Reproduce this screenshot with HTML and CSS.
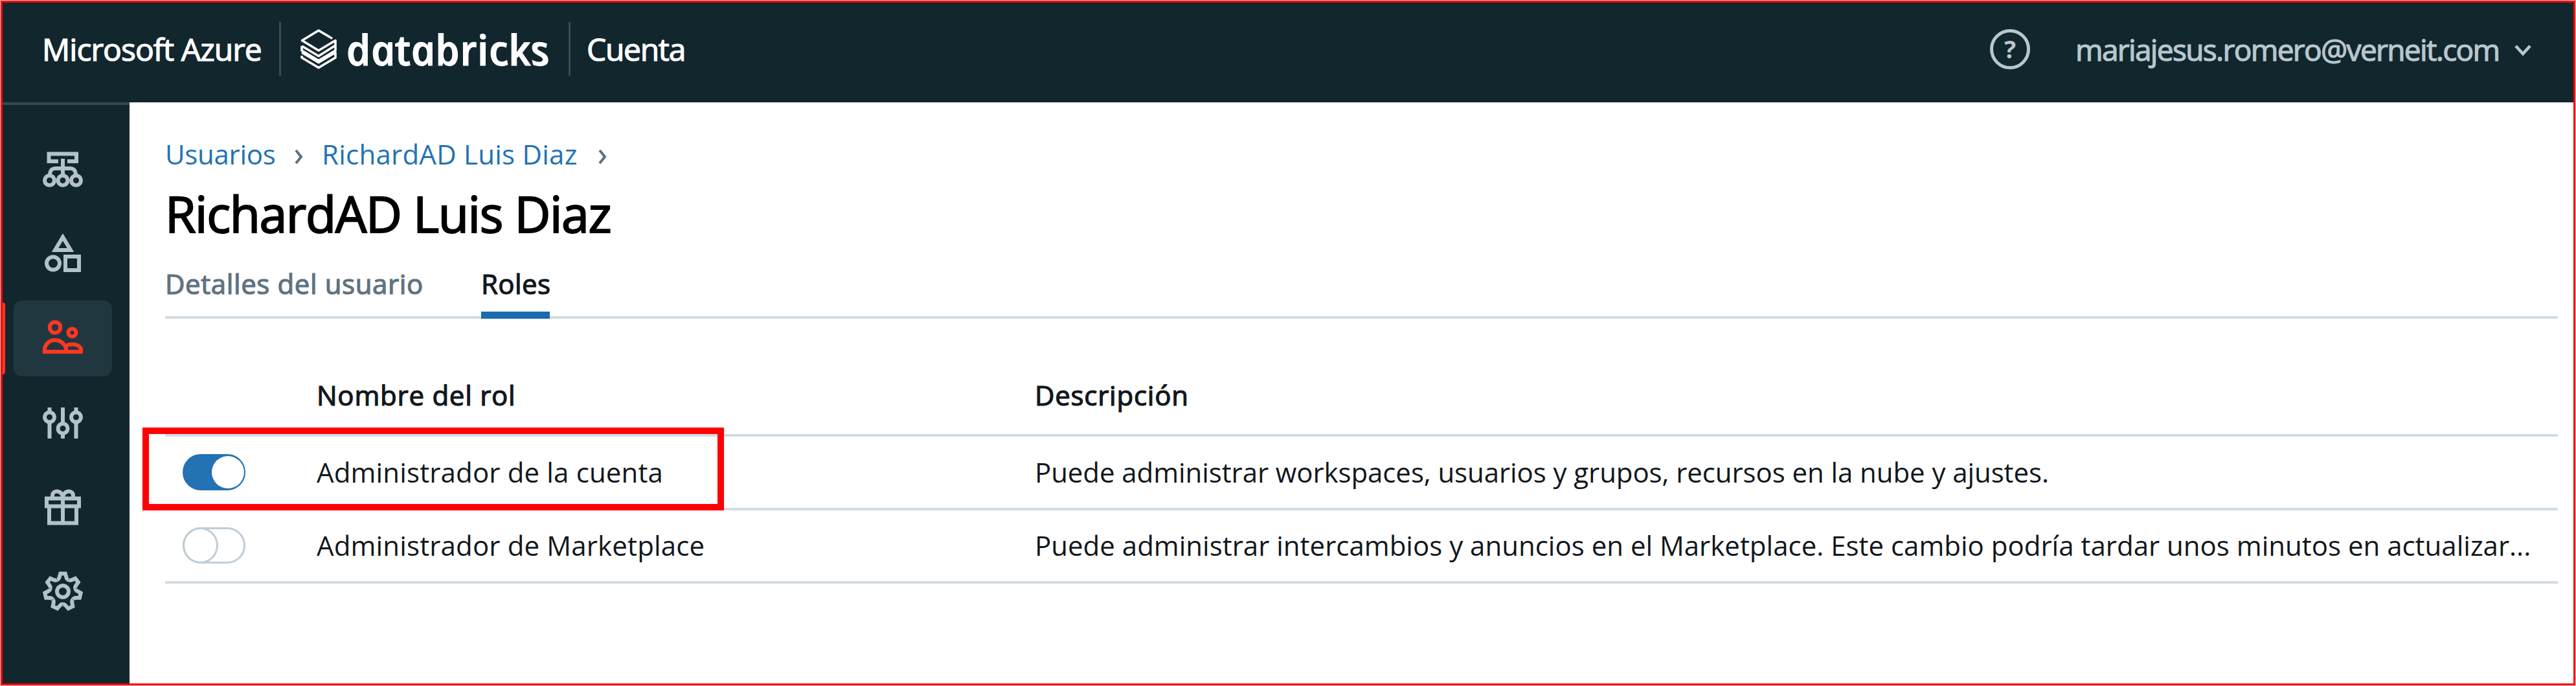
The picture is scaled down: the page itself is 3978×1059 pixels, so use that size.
FILE: index.html
```
<!DOCTYPE html>
<html lang="es">
<head>
<meta charset="utf-8">
<title>Databricks - Cuenta</title>
<link rel="stylesheet" href="styles.css">
</head>
<body>
<div class="frame">
  <header class="topbar">
    <span class="azure">Microsoft Azure</span>
    <span class="divider"></span>
    <div class="logo">
      <svg class="logo-mark" viewBox="0 0 58 64"><path d="M55 23.5V18.500L29 34 3.500 18.500 29 3 50 15.500M3 27v7l26 15.500L55 34v-8M3 27l26 15.500L55 26V18M3 42v3l26 15.500L55 45v-8L29 52.500 3 37"/></svg>
      <span class="logo-text">databricks</span>
    </div>
    <span class="divider"></span>
    <span class="product">Cuenta</span>
    <div class="account">
      <span class="help">?</span>
      <span class="email">mariajesus.romero@verneit.com</span>
      <svg class="caret" viewBox="0 0 28 20"><path d="M3 3l11 12L25 3"/></svg>
    </div>
  </header>
  <div class="body">
    <nav class="sidebar">
      <a class="item"><svg class="icon" viewBox="0 0 62 62"><path d="M24 18H9.500V6.500H52V18H38M31 14v26M11 40C11 32 14 29 20 29H42C48 29 51 32 51 40"/><circle cx="10.500" cy="47.500" r="7.500"/><circle cx="31" cy="47.500" r="7.500"/><circle cx="51.500" cy="47.500" r="7.500"/></svg></a>
      <a class="item"><svg class="icon" viewBox="0 0 62 62"><path d="M31 5L19 25H43ZM35 35H56V56H35Z"/><circle cx="16" cy="45.500" r="10"/></svg></a>
      <a class="item active"><svg class="icon" viewBox="0 0 62 62"><circle cx="19" cy="14.500" r="8.200"/><circle cx="45.500" cy="22.500" r="6"/><path d="M3 52V46C6 38 12 34 19 34S32 38 36 46V52ZM36 52H59V47C56 42 51 40.500 45.500 40.500C41 40.500 38 41.500 35 43"/></svg></a>
      <a class="item"><svg class="icon" viewBox="0 0 62 62"><path d="M10.500 7v8M10.500 29v26M31 7v25M31 47v8M51.500 7v8M51.500 29v26"/><circle cx="10.500" cy="22" r="7.500"/><circle cx="31" cy="39.500" r="7.500"/><circle cx="51.500" cy="22" r="7.500"/></svg></a>
      <a class="item"><svg class="icon" viewBox="0 0 62 62"><path d="M6 17.500H56V29.500H6ZM10 29.500V55.500H52V29.500M31 15V55M15 17V13C15 9 18 6.500 21.500 6.500C26 6.500 31 10 31 16C31 10 36 6.500 40.500 6.500C44 6.500 47 9 47 13V17"/></svg></a>
      <a class="item"><svg class="icon" viewBox="-31 -31 62 62"><defs><path id="tooth" d="M-8.500 -18Q-6.200 -18.800 -5.300 -22L-3.800 -27.500H3.800L5.300 -22Q6.200 -18.800 8.500 -18"/></defs><use href="#tooth"/><use href="#tooth" transform="rotate(51.430)"/><use href="#tooth" transform="rotate(102.860)"/><use href="#tooth" transform="rotate(154.290)"/><use href="#tooth" transform="rotate(205.710)"/><use href="#tooth" transform="rotate(257.140)"/><use href="#tooth" transform="rotate(308.570)"/><circle r="9"/></svg></a>
    </nav>
    <main class="main">
      <div class="crumbs">
        <a class="crumb">Usuarios</a>
        <svg class="sep" viewBox="0 0 13 24"><path d="M2 2l8 10-8 10"/></svg>
        <a class="crumb person">RichardAD Luis Diaz</a>
        <svg class="sep" viewBox="0 0 13 24"><path d="M2 2l8 10-8 10"/></svg>
      </div>
      <h1 class="title">RichardAD Luis Diaz</h1>
      <div class="tabs">
        <a class="tab">Detalles del usuario</a>
        <a class="tab current">Roles</a>
      </div>
      <div class="table">
        <div class="row head"><span></span><span>Nombre del rol</span><span>Descripción</span></div>
        <div class="row">
          <span class="toggle on"></span>
          <span class="name">Administrador de la cuenta</span>
          <span class="short">Puede administrar workspaces, usuarios y grupos, recursos en la nube y ajustes.</span>
          <span class="highlight"></span>
        </div>
        <div class="row">
          <span class="toggle"></span>
          <span class="name">Administrador de Marketplace</span>
          <span>Puede administrar intercambios y anuncios en el Marketplace. Este cambio podría tardar unos minutos en actualizar...</span>
        </div>
      </div>
    </main>
  </div>
</div>
</body>
</html>
```
FILE: styles.css
```
*, *::before { box-sizing: border-box; }
body {
  margin: 0;
  padding: 1px;
  height: 1059px;
  background: #f5d3d3;
  font: 400 42px/56px "Open Sans", sans-serif;
  color: #11171c;
}
svg { display: block; fill: none; stroke: currentColor; flex: none; }
.frame {
  height: 1057px;
  border: 3px solid #f00;
  background: #fff;
  display: flex;
  flex-direction: column;
}

/* Medium weight, between the regular and semibold cuts */
.azure, .product, .email, .tab, .row.head { -webkit-text-stroke: 1.2px currentColor; }

/* Top bar */
.topbar {
  height: 154px;
  flex: none;
  padding: 0 64px 11px 61px;
  background: #12262d;
  color: #fff;
  display: flex;
  align-items: center;
  white-space: nowrap;
}
.azure, .product { font-size: 48px; }
.azure { width: 366px; letter-spacing: -0.95px; }
.product { margin-left: 25px; letter-spacing: -1.3px; }
.divider { width: 3px; height: 83px; background: #3b4b52; flex: none; }
.logo { width: 444px; padding-left: 29px; display: flex; align-items: center; gap: 12px; }
.logo-mark { width: 58px; height: 64px; stroke-width: 3.6; stroke-linejoin: round; }
/* The italic cut has the wordmark's single-storey "a"; the skew sets it upright. */
.logo-text {
  display: inline-block;
  font-size: 65px;
  font-style: italic;
  font-weight: 600;
  -webkit-text-stroke: 1px currentColor;
  transform: skewX(12deg);
}
.account { margin-left: auto; display: flex; align-items: center; color: #b8c7ce; }
.help {
  width: 62px;
  height: 62px;
  border: 5.5px solid;
  border-radius: 50%;
  font-size: 38px;
  line-height: 50px;
  font-weight: 700;
  text-align: center;
}
.email { width: 677px; margin-left: 70px; font-size: 46px; letter-spacing: -1.65px; }
.caret { width: 28px; height: 20px; stroke-width: 4.8; margin-top: 5px; }

/* Sidebar */
.body { flex: 1; display: flex; min-height: 0; }
.sidebar {
  width: 196px;
  flex: none;
  padding: 41px 0 0 17px;
  border-top: 4px solid #39484e;
  background: #12262d;
  color: #b3c2c9;
  display: flex;
  flex-direction: column;
  gap: 13.4px;
}
.item {
  position: relative;
  width: 152px;
  height: 117px;
  border-radius: 13px;
  display: flex;
  align-items: center;
  justify-content: center;
}
.item.active { background: #203740; color: #ff3621; }
.item.active::before {
  content: "";
  position: absolute;
  left: -17px;
  top: 3px;
  width: 4px;
  height: 111px;
  border-radius: 0 4px 4px 0;
  background: #ff3621;
}
.icon { width: 62px; height: 62px; stroke-width: 6; }

/* Content */
.main { flex: 1; min-width: 0; padding: 52px 24px 0 55px; }
.crumbs { display: flex; align-items: center; height: 56px; color: #2272b4; }
.crumb:first-child { width: 200px; letter-spacing: -0.3px; }
.crumb.person { margin-left: 29px; width: 427px; letter-spacing: 0.25px; }
.sep { width: 13px; height: 24px; stroke: #5f7281; stroke-width: 4; margin-top: 7px; }
.title {
  margin: 14px 0 0;
  font-size: 77px;
  font-weight: 400;
  line-height: 100px;
  letter-spacing: -1.4px;
  color: #000;
  -webkit-text-stroke: 2px currentColor;
}
.tabs {
  height: 98px;
  margin-top: 14px;
  display: flex;
  gap: 89px;
  box-shadow: inset 0 -4px #d3dce3;
  line-height: 87px;
}
.tab { width: 399px; letter-spacing: 0.6px; color: #5f7281; white-space: nowrap; }
.tab.current { width: 106px; color: #11171c; letter-spacing: 0.4px; border-bottom: 11px solid #1a6bb0; }

/* Roles table */
.table { margin-top: 57px; }
.row {
  position: relative;
  display: grid;
  grid-template-columns: 234px 1109px 1fr;
  align-items: center;
  height: 113.500px;
  border-bottom: 4px solid #d3dce3;
  white-space: nowrap;
}
.row.head { height: 125px; letter-spacing: 0.75px; }
.name { letter-spacing: 0.15px; }
.short { letter-spacing: -0.08px; }
.toggle {
  width: 97px;
  height: 56px;
  margin-left: 27px;
  border: 3px solid #c0cdd8;
  border-radius: 28px;
  display: flex;
}
.toggle::before {
  content: "";
  width: 55px;
  height: 56px;
  margin: -3px;
  border: 3px solid #c0cdd8;
  border-radius: 50%;
}
.toggle.on { background: #2272b4; border-color: #2272b4; justify-content: flex-end; }
.toggle.on::before { width: 50px; height: 50px; margin: 0 -1px 0 0; border: 0; background: #fff; }
.highlight {
  position: absolute;
  left: -35px;
  top: -14px;
  width: 898px;
  height: 128px;
  border: 10px solid #f00;
}
```
